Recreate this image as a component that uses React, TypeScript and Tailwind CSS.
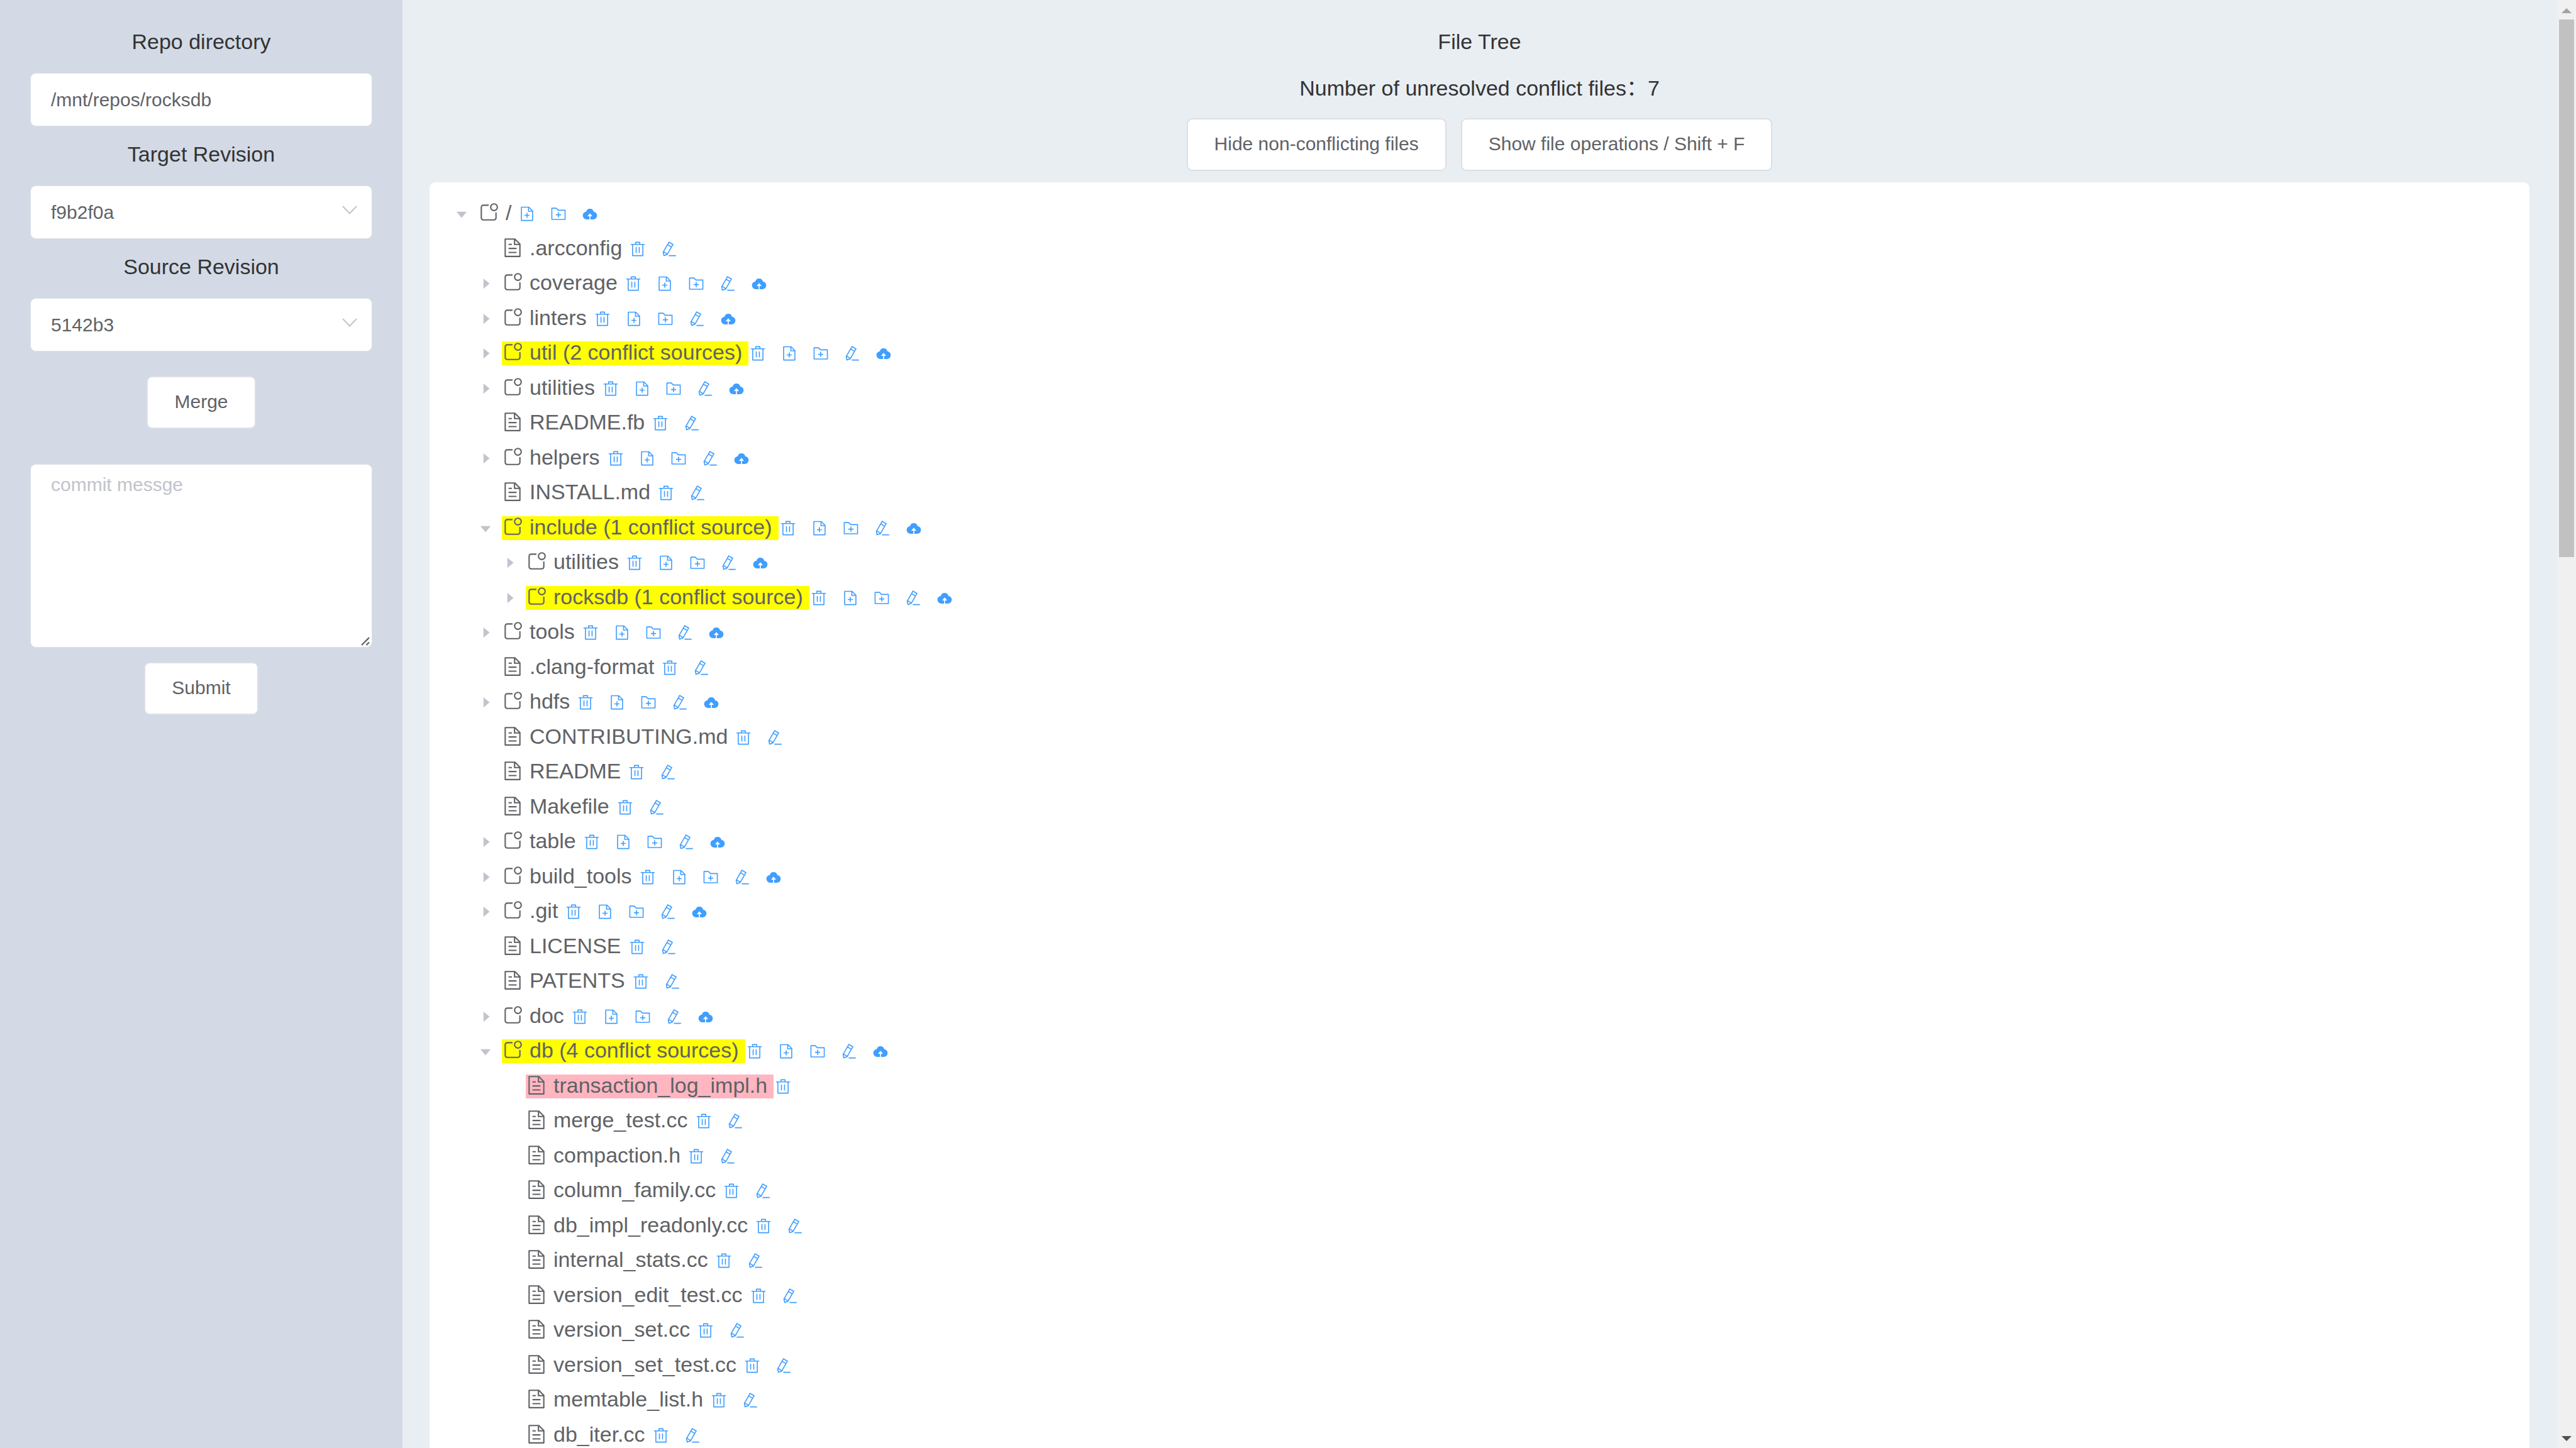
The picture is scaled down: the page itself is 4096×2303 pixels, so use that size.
import React from "react";

type Mark = "none" | "conflict" | "file-conflict";

interface TreeNode {
  name: string;
  level: 0 | 1 | 2;
  kind: "folder" | "file";
  open?: boolean;
  mark?: Mark;
}

const dir = (name: string, level: 0 | 1 | 2 = 1, open = false, mark: Mark = "none"): TreeNode => ({
  name,
  level,
  kind: "folder",
  open,
  mark,
});

const file = (name: string, level: 0 | 1 | 2 = 1, mark: Mark = "none"): TreeNode => ({
  name,
  level,
  kind: "file",
  mark,
});

const nodes: TreeNode[] = [
  dir("/", 0, true),
  file(".arcconfig"),
  dir("coverage"),
  dir("linters"),
  dir("util (2 conflict sources)", 1, false, "conflict"),
  dir("utilities"),
  file("README.fb"),
  dir("helpers"),
  file("INSTALL.md"),
  dir("include (1 conflict source)", 1, true, "conflict"),
  dir("utilities", 2),
  dir("rocksdb (1 conflict source)", 2, false, "conflict"),
  dir("tools"),
  file(".clang-format"),
  dir("hdfs"),
  file("CONTRIBUTING.md"),
  file("README"),
  file("Makefile"),
  dir("table"),
  dir("build_tools"),
  dir(".git"),
  file("LICENSE"),
  file("PATENTS"),
  dir("doc"),
  dir("db (4 conflict sources)", 1, true, "conflict"),
  file("transaction_log_impl.h", 2, "file-conflict"),
  file("merge_test.cc", 2),
  file("compaction.h", 2),
  file("column_family.cc", 2),
  file("db_impl_readonly.cc", 2),
  file("internal_stats.cc", 2),
  file("version_edit_test.cc", 2),
  file("version_set.cc", 2),
  file("version_set_test.cc", 2),
  file("memtable_list.h", 2),
  file("db_iter.cc", 2),
];

const paths = {
  caret: "M384 192v640l384-320.064z",
  folder:
    "M512 128v64H256a64 64 0 0 0-64 64v512a64 64 0 0 0 64 64h512a64 64 0 0 0 64-64V512h64v256a128 128 0 0 1-128 128H256a128 128 0 0 1-128-128V256a128 128 0 0 1 128-128zM768 384a128 128 0 1 0 0-256 128 128 0 0 0 0 256m0 64a192 192 0 1 1 0-384 192 192 0 0 1 0 384",
  document:
    "M832 384H576V128H192v768h640zm-26.496-64L640 154.496V320zM160 64h480l256 256v608a32 32 0 0 1-32 32H160a32 32 0 0 1-32-32V96a32 32 0 0 1 32-32m160 448h384v64H320zm0-192h160v64H320zm0 384h384v64H320z",
  remove:
    "M160 256H96a32 32 0 0 1 0-64h256V95.936a32 32 0 0 1 32-32h256a32 32 0 0 1 32 32V192h256a32 32 0 1 1 0 64h-64v672a32 32 0 0 1-32 32H192a32 32 0 0 1-32-32zm448-64v-64H416v64zM224 896h576V256H224zm192-128a32 32 0 0 1-32-32V416a32 32 0 0 1 64 0v320a32 32 0 0 1-32 32m192 0a32 32 0 0 1-32-32V416a32 32 0 0 1 64 0v320a32 32 0 0 1-32 32",
  addFile:
    "M832 384H576V128H192v768h640zm-26.496-64L640 154.496V320zM160 64h480l256 256v608a32 32 0 0 1-32 32H160a32 32 0 0 1-32-32V96a32 32 0 0 1 32-32m320 512V448h64v128h128v64H544v128h-64V640H352v-64z",
  addFolder:
    "M128 192v640h768V320H485.76L357.504 192zm-32-64h287.872l128.384 128H928a32 32 0 0 1 32 32v576a32 32 0 0 1-32 32H96a32 32 0 0 1-32-32V160a32 32 0 0 1 32-32m384 416V416h64v128h128v64H544v128h-64V608H352v-64z",
  rename:
    "m199.04 672.64 193.984 112 224-387.968-193.92-112-224 388.032zm-23.872 60.16 32.896 148.288 144.896-45.696zM455.04 229.248l193.92 112 56.704-98.112-193.984-112zM104.32 708.8l384-665.024 304.768 175.936L409.152 884.8h.064l-248.448 78.336zm384 254.272v-64h448v64z",
  upload:
    "M544 864V672h128L512 480 352 672h128v192H320v-1.6c-5.376.32-10.496 1.6-16 1.6A240 240 0 0 1 64 624c0-123.136 93.12-223.488 212.608-237.248A239.808 239.808 0 0 1 512 192a239.872 239.872 0 0 1 235.456 194.752c119.488 13.76 212.48 114.112 212.48 237.248a240 240 0 0 1-240 240c-5.376 0-10.56-1.28-16-1.6v1.6z",
};

type IconName = keyof typeof paths;

function Icon({ name, className }: { name: IconName; className: string }) {
  return (
    <svg viewBox="0 0 1024 1024" fill="currentColor" aria-hidden="true" className={className}>
      <path d={paths[name]} />
    </svg>
  );
}

const actionLabels: Partial<Record<IconName, string>> = {
  remove: "Delete",
  addFile: "New file",
  addFolder: "New folder",
  rename: "Rename",
  upload: "Upload",
};

function actionsFor(node: TreeNode): IconName[] {
  if (node.level === 0) return ["addFile", "addFolder", "upload"];
  if (node.kind === "folder") return ["remove", "addFile", "addFolder", "rename", "upload"];
  return node.mark === "file-conflict" ? ["remove"] : ["remove", "rename"];
}

const indent = { 0: "pl-[38px]", 1: "pl-[76px]", 2: "pl-[114px]" };
const marks: Record<Mark, string> = {
  none: "",
  conflict: "bg-[#ffff00]",
  "file-conflict": "bg-[#ffb6c1]",
};

function TreeRow({ node }: { node: TreeNode }) {
  return (
    <li className={`flex items-center pt-[3px] odd:h-[55px] even:h-[56px] ${indent[node.level]}`}>
      {node.kind === "folder" ? (
        <button
          type="button"
          aria-label={node.open ? "Collapse" : "Expand"}
          aria-expanded={!!node.open}
          className="mr-[13px] size-[26px] text-[#c0c4cc]"
        >
          <Icon name="caret" className={`size-[26px] ${node.open ? "rotate-90" : ""}`} />
        </button>
      ) : (
        <span className="mr-[13px] size-[26px]" />
      )}
      <span
        className={`flex h-[38px] items-start pr-[10px] text-[34px] leading-[34px] whitespace-nowrap ${marks[node.mark ?? "none"]}`}
      >
        <Icon name={node.kind === "folder" ? "folder" : "document"} className="mr-[10px] size-[34px]" />
        {node.name}
      </span>
      <span className="ml-[2px] flex gap-[24px] text-[#409eff]">
        {actionsFor(node).map((a) => (
          <button key={a} type="button" aria-label={`${actionLabels[a]} ${node.name}`} className="size-[26px]">
            <Icon name={a} className="size-[26px]" />
          </button>
        ))}
      </span>
    </li>
  );
}

function Button({ children }: { children: React.ReactNode }) {
  return (
    <button
      type="button"
      className="h-[84px] rounded-[9px] border-2 border-[#dcdfe6] bg-white px-[42px] pb-[2px] text-[30px] leading-[30px] whitespace-nowrap text-[#606266]"
    >
      {children}
    </button>
  );
}

const fieldLabel = "block pb-[6px] text-center text-[34px] leading-[88px] text-[#333333]";
const field =
  "block h-[85px] w-full appearance-none rounded-[9px] border border-[#dcdfe6] bg-white px-[32px] text-[30px] text-[#606266] outline-none";

function RevisionSelect({ id, label, value }: { id: string; label: string; value: string }) {
  return (
    <>
      <label htmlFor={id} className={fieldLabel}>
        {label}
      </label>
      <div className="relative">
        <select id={id} defaultValue={value} className={field}>
          <option>{value}</option>
        </select>
        <svg
          viewBox="0 0 24 14"
          fill="none"
          stroke="#c0c4cc"
          strokeWidth="2"
          strokeLinecap="round"
          aria-hidden="true"
          className="pointer-events-none absolute top-[32px] right-[24px] h-[14px] w-[24px]"
        >
          <path d="M1.5 1.5 12 12.5 22.5 1.5" />
        </svg>
      </div>
    </>
  );
}

function Sidebar() {
  return (
    <aside className="flex w-[640px] shrink-0 flex-col bg-[#d3dae6] px-[48px] pt-[22px]">
      <label htmlFor="repo" className={fieldLabel}>
        Repo directory
      </label>
      <input id="repo" type="text" defaultValue="/mnt/repos/rocksdb" className={field} />
      <RevisionSelect id="target" label="Target Revision" value="f9b2f0a" />
      <RevisionSelect id="source" label="Source Revision" value="5142b3" />
      <div className="mt-[39px] flex justify-center">
        <Button>Merge</Button>
      </div>
      <div className="relative mt-[56px]">
        <textarea
          aria-label="Commit message"
          placeholder="commit messge"
          className="block h-[292px] w-full resize-none rounded-[9px] border border-[#dcdfe6] bg-white px-[32px] py-[9px] text-[30px] leading-[45px] text-[#606266] outline-none placeholder:text-[#c0c4cc]"
        />
        <svg
          viewBox="0 0 14 14"
          fill="none"
          stroke="#646464"
          strokeWidth="2.4"
          aria-hidden="true"
          className="pointer-events-none absolute right-[4px] bottom-[3px] size-[14px]"
        >
          <path d="M1 13 13 1M8.500 13 13 8.500" />
        </svg>
      </div>
      <div className="mt-[23px] flex justify-center">
        <Button>Submit</Button>
      </div>
    </aside>
  );
}

function Scrollbar() {
  return (
    <div aria-hidden="true" className="flex w-[31px] shrink-0 flex-col items-center bg-[#f0f0f0]">
      <svg viewBox="0 0 16 8" className="mt-[13px] h-[8px] w-[16px]">
        <path d="M8 0 16 8H0z" fill="#a3a3a3" />
      </svg>
      <div className="mt-[10px] h-[855px] w-[24px] bg-[#c1c1c1]" />
      <svg viewBox="0 0 16 8" className="mt-auto mb-[11px] h-[8px] w-[16px]">
        <path d="M0 0H16L8 8z" fill="#505050" />
      </svg>
    </div>
  );
}

export default function App() {
  return (
    <div className="flex h-screen overflow-hidden font-['Liberation_Sans','Noto_Sans_CJK_SC',sans-serif]">
      <Sidebar />
      <main className="flex min-w-0 flex-1 flex-col bg-[#e9eef3] px-[43px] pt-[29px] text-[#333333]">
        <h1 className="text-center text-[34px] leading-[74px]">File Tree</h1>
        <p className="text-center text-[34px] leading-[74px]">Number of unresolved conflict files：7</p>
        <div className="mt-[11px] flex justify-center gap-[23px]">
          <Button>Hide non-conflicting files</Button>
          <Button>Show file operations / Shift + F</Button>
        </div>
        <section className="mt-[18px] flex-1 rounded-t-[9px] bg-white pt-[21px]">
          <ul className="text-[#606266]">
            {nodes.map((n, i) => (
              <TreeRow key={i} node={n} />
            ))}
          </ul>
        </section>
      </main>
      <Scrollbar />
    </div>
  );
}
